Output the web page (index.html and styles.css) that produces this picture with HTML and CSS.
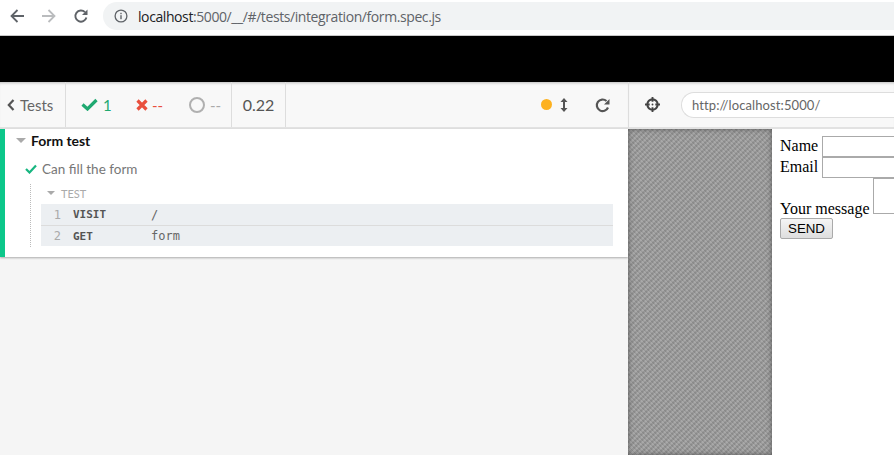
FILE: index.html
```html
<!DOCTYPE html>
<html lang="en">
<head>
<meta charset="utf-8">
<title>Form test</title>
<link rel="stylesheet" href="styles.css">
</head>
<body>
<div class="browser-bar">
  <svg class="nav-icon nav-back" viewBox="0 0 16 16"><path d="M15 8H2.500M8.500 2 2.500 8 8.500 14" fill="none" stroke="#5f6368" stroke-width="1.800"/></svg>
  <svg class="nav-icon nav-fwd" viewBox="0 0 16 16"><path d="M1 8H13.500M7.500 2 13.500 8 7.500 14" fill="none" stroke="#babcbe" stroke-width="1.800"/></svg>
  <svg class="nav-icon nav-reload" viewBox="0 0 16 16"><path d="M13.400 9.500A5.600 5.600 0 1 1 12 4.200" fill="none" stroke="#5f6368" stroke-width="1.900"/><path d="M14.500 1.500V7H9z" fill="#5f6368"/></svg>
  <div class="omnibox">
    <svg class="info-icon" viewBox="0 0 14 14"><circle cx="7" cy="7" r="5.900" fill="none" stroke="#5f6368" stroke-width="1.300"/><rect x="6.300" y="6.200" width="1.400" height="4" fill="#5f6368"/><rect x="6.300" y="3.800" width="1.400" height="1.400" fill="#5f6368"/></svg>
    <span class="url"><span class="url-host">localhost</span>:5000/__/#/tests/integration/form.spec.js</span>
  </div>
</div>
<div class="black-band"></div>
<div class="app">
  <section class="reporter">
    <header class="stats">
      <div class="stat-cell back-cell">
        <svg class="chev" viewBox="0 0 8 12"><path d="M6.500 1 1.800 6l4.700 5" fill="none" stroke="#555" stroke-width="2.200"/></svg>
        <span>Tests</span>
      </div>
      <div class="stat-cell counts-cell">
        <span class="count count-pass">
          <svg class="count-check" viewBox="0 0 17 13"><path d="M1.500 6.500 6.500 11 15.500 2" fill="none" stroke="#1fa971" stroke-width="3.200"/></svg>
          <span>1</span>
        </span>
        <span class="count count-fail">
          <svg class="count-x" viewBox="0 0 12 12"><path d="M1.500 1.500 10.500 10.500M10.500 1.500 1.500 10.500" fill="none" stroke="#e94f3d" stroke-width="3.200"/></svg>
          <span>--</span>
        </span>
        <span class="count count-pending">
          <span class="ring"></span>
          <span>--</span>
        </span>
      </div>
      <div class="stat-cell time-cell">0.22</div>
      <div class="stats-right">
        <span class="dot"></span>
        <svg class="updown" viewBox="0 0 8 14"><path d="M4 1.500V12.500" stroke="#555" stroke-width="2"/><path d="M4 0 7.500 4H.5zM4 14 .5 10h7z" fill="#555"/></svg>
        <svg class="rerun" viewBox="0 0 16 16"><path d="M13 10.500A5.800 5.800 0 1 1 11.500 4" fill="none" stroke="#555" stroke-width="2.200"/><path d="M14.500 2V7.500H9z" fill="#555"/></svg>
      </div>
    </header>
    <div class="runnables">
      <div class="suite">
        <div class="suite-title"><span class="caret"></span><span>Form test</span></div>
        <div class="test-title">
          <svg class="test-check" viewBox="0 0 12 10"><path d="M1 5 4.500 8.500 11 1.500" fill="none" stroke="#17b680" stroke-width="2.200"/></svg>
          <span>Can fill the form</span>
        </div>
        <div class="commands">
          <div class="cmd-head"><span class="caret caret-sm"></span><span>TEST</span></div>
          <div class="cmd-row"><span class="cmd-num">1</span><span class="cmd-name">VISIT</span><span class="cmd-arg">/</span></div>
          <div class="cmd-row"><span class="cmd-num">2</span><span class="cmd-name">GET</span><span class="cmd-arg">form</span></div>
        </div>
      </div>
    </div>
  </section>
  <section class="preview">
    <header class="url-header">
      <svg class="target" viewBox="0 0 16 16"><circle cx="8" cy="8" r="5.500" fill="none" stroke="#444" stroke-width="2.200"/><path d="M8 0V5M8 11V16M0 8H5M11 8H16" stroke="#444" stroke-width="2"/><circle cx="8" cy="8" r="1" fill="#444"/></svg>
      <div class="aut-url">http://localhost:5000/</div>
    </header>
    <div class="stage">
      <div class="hatch"></div>
      <form class="aut">
        <label class="aut-field">Name <input class="aut-input" type="text"></label>
        <label class="aut-field">Email <input class="aut-input" type="text"></label>
        <label class="aut-field">Your message <textarea class="aut-area"></textarea></label>
        <button class="aut-send" type="button">SEND</button>
      </form>
    </div>
  </section>
</div>
</body>
</html>
```
FILE: styles.css
```css
* { box-sizing: border-box; }
html, body { margin: 0; height: 100%; overflow: hidden; }
body { width: 894px; height: 455px; background: #f5f5f5; font-family: "Lato", "Liberation Sans", sans-serif; }

.browser-bar { height: 36px; background: #fff; display: flex; align-items: center; padding: 0 0 3px 9px; border-bottom: 1px solid #c8c8c8; }
.nav-icon { width: 16px; height: 16px; flex: none; }
.nav-fwd { margin-left: 16px; }
.nav-reload { margin-left: 16px; }
.omnibox { margin-left: 14px; flex: 1; height: 28px; background: #f1f3f4; border-radius: 14px 0 0 14px; display: flex; align-items: center; padding-left: 11px; }
.info-icon { width: 14px; height: 14px; flex: none; }
.url { margin-left: 10px; font: 14px "Open Sans", sans-serif; color: #5f6368; white-space: nowrap; letter-spacing: -.41px; }
.url-host { color: #202124; }

.black-band { height: 46px; background: #000; }

.app { display: flex; height: 373px; }
.reporter { width: 628px; flex: none; display: flex; flex-direction: column; }
.stats { height: 47px; flex: none; display: flex; align-items: center; background: #f8f8f8; border-bottom: 2px solid #e2e2e2; box-shadow: inset 0 3px 3px -2px #bbb; color: #555; }
.stat-cell { height: 100%; display: flex; align-items: center; border-right: 1px solid #ddd; }
.back-cell { width: 66px; padding-left: 7px; gap: 5px; font-size: 15px; color: #666; }
.chev { width: 8px; height: 12px; }
.counts-cell { width: 166px; padding-left: 15px; font-size: 15px; }
.count { display: flex; align-items: center; }
.count-pass { width: 55px; color: #1fa971; gap: 5px; }
.count-fail { width: 53px; color: #e94f3d; gap: 4px; }
.count-pending { color: #aaa; gap: 5px; }
.count-check { width: 17px; height: 13px; }
.count-x { width: 12px; height: 12px; }
.ring { width: 16px; height: 16px; border: 2.500px solid #b0b0b0; border-radius: 50%; }
.time-cell { width: 54px; justify-content: center; font-size: 16px; color: #555; }
.stats-right { flex: 1; display: flex; align-items: center; padding-left: 255px; }
.dot { width: 11px; height: 11px; border-radius: 50%; background: #fdb11f; }
.updown { width: 8px; height: 14px; margin-left: 8px; }
.rerun { width: 16px; height: 16px; margin-left: 27px; }

.runnables { flex: 1; }
.suite { height: 128px; background: #fff; border-left: 5px solid #0cc78a; box-shadow: 0 1px 2px #aaa; padding-left: 11px; }
.suite-title { height: 22px; display: flex; align-items: center; gap: 5px; font-size: 14px; font-weight: 700; color: #111; letter-spacing: -.05px; }
.caret { width: 0; height: 0; border: 5px solid transparent; border-top: 5px solid #aaa; border-bottom: 0; }
.test-title { margin: 8px 0 0 9px; height: 20px; display: flex; align-items: center; gap: 5px; font-size: 13.500px; color: #777; }
.test-check { width: 12px; height: 10px; }
.commands { margin: 5px 0 0 14px; width: 583px; border-left: 1px dotted #bbb; padding-left: 10px; height: 63px; }
.cmd-head { height: 20px; padding-bottom: 2px; display: flex; align-items: center; gap: 6px; padding-left: 6px; font-size: 11px; color: #aaa; }
.caret-sm { border-width: 4.500px; border-top-width: 4.500px; border-bottom: 0; }
.cmd-row { height: 21px; background: #eceff2; display: flex; align-items: center; font: 12px "DejaVu Sans Mono", monospace; color: #666; }
.cmd-row + .cmd-row { border-top: 1px solid #dcdcdc; }
.cmd-num { width: 32px; padding-right: 12px; text-align: right; color: #aaa; }
.cmd-name { width: 78px; font-weight: 700; font-size: 11px; color: #555; }

.preview { flex: 1; display: flex; flex-direction: column; min-width: 0; }
.url-header { height: 47px; flex: none; display: flex; align-items: center; background: #f8f8f8; border-left: 1px solid #ddd; border-bottom: 2px solid #e2e2e2; box-shadow: inset 0 3px 3px -2px #bbb; padding-left: 16px; }
.target { width: 15px; height: 15px; flex: none; }
.aut-url { margin-left: 21px; flex: 1; height: 26px; background: #fff; border: 1px solid #ddd; border-right: 0; border-radius: 13px 0 0 13px; padding-left: 10px; font-size: 13px; line-height: 24px; color: #666; letter-spacing: .1px; }
.stage { flex: 1; display: flex; min-height: 0; }
.hatch { width: 144px; flex: none; background: repeating-linear-gradient(-45deg, rgba(0,0,0,.07) 0 2.120px, rgba(255,255,255,.07) 2.120px 4.240px), repeating-linear-gradient(45deg, #949494 0 1.410px, #a3a3a3 1.410px 2.830px); box-shadow: inset 0 0 5px #555; }
.aut { flex: 1; min-width: 0; overflow: hidden; background: #fff; padding: 7px 0 0 8px; font: 16px "Liberation Serif", serif; color: #000; }
.aut-field { display: block; white-space: nowrap; }
.aut-input { width: 153px; height: 21px; padding: 1px 2px; border: 1px solid #aaa; margin: 0; vertical-align: baseline; }
.aut-area { width: 182px; height: 36px; border: 1px solid #aaa; margin: 0; resize: none; vertical-align: baseline; }
.aut-send { display: block; width: 53px; height: 21px; padding: 0; border: 1px solid #aaa; border-radius: 2px; background: linear-gradient(#f5f5f5, #dedede); font: 13.300px "Liberation Sans", sans-serif; color: #000; }
```
